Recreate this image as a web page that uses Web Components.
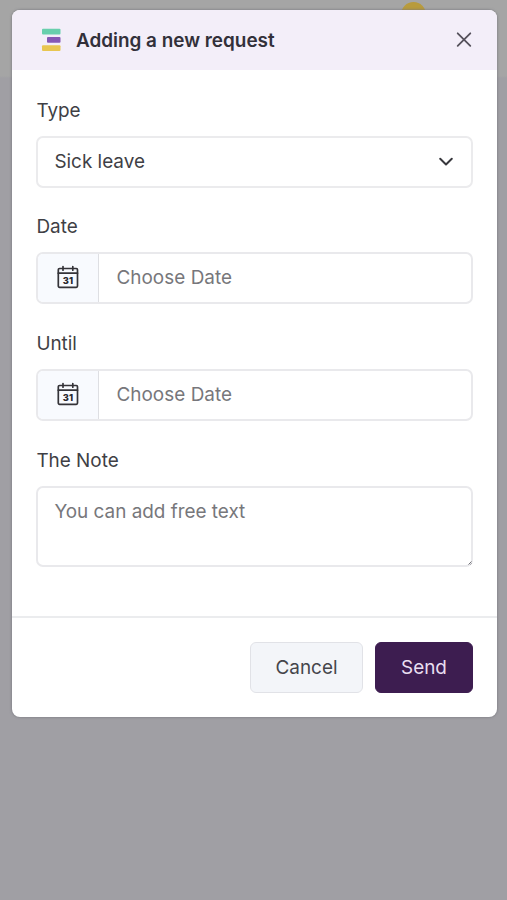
<!DOCTYPE html>
<html lang="en">
<head>
<meta charset="utf-8">
<title>Adding a new request</title>
<style>
html,body{margin:0;height:100%}
body{font-family:Inter,"Liberation Sans",sans-serif;font-size:18.9px;line-height:26px;color:#3f3f45;overflow:hidden}
</style>
</head>
<body>
<request-page>
  <request-dialog heading="Adding a new request">
    <form-field label="Type"><select-box>Sick leave</select-box></form-field>
    <form-field label="Date"><date-box>Choose Date</date-box></form-field>
    <form-field label="Until"><date-box>Choose Date</date-box></form-field>
    <form-field label="The Note"><note-box>You can add free text</note-box></form-field>
    <action-button slot="actions">Cancel</action-button>
    <action-button slot="actions" variant="primary">Send</action-button>
  </request-dialog>
</request-page>
<script>
const element = (name, render) => customElements.define(name, class extends HTMLElement {
  constructor() {
    super();
    this.attachShadow({mode: "open"});
  }
  connectedCallback() {
    this.shadowRoot.innerHTML = render(this);
  }
});

element("request-page", () => `
<style>
:host{display:block;box-sizing:border-box;height:900px;padding:9.5px 10px 0 12px;position:relative;background:linear-gradient(#a5a5a5 0 76px,#a09fa4 78px)}
.avatar{position:absolute;left:401px;top:2px;width:25px;height:25px;border-radius:50%;background:#b89b3c}
</style>
<span class="avatar"></span><slot></slot>`);

element("request-dialog", host => `
<style>
:host{position:relative;height:707.5px;background:#fff;border-radius:8px;overflow:hidden;box-shadow:0 0 2px 1px #77777d88;display:flex;flex-direction:column}
header{height:60.5px;box-sizing:border-box;background:#f3eef9;display:flex;align-items:center;padding:0 23px 0 29px;flex:none}
h1{font-size:18.9px;line-height:26px;font-weight:600;margin:2px auto 0 14px;color:#32303a;white-space:nowrap}
svg{display:block}
main{flex:1;padding:27.6px 24px 0 24.4px;display:flex;flex-direction:column}
footer{height:101.5px;flex:none;border-top:2px solid #ebecee;box-sizing:border-box;display:flex;justify-content:flex-end;gap:12px;padding:24.3px 24px 0}
</style>
<header>
<svg width="21" height="24" viewBox="0 0 21 24"><rect x="1" y=".8" width="18.5" height="5.7" rx="1" fill="#68cfad"/><rect x="6" y="9" width="13.5" height="5.7" rx="1" fill="#8558b5"/><rect x="1" y="17.2" width="18.5" height="5.7" rx="1" fill="#e8c651"/></svg>
<h1>${host.getAttribute("heading")}</h1>
<svg width="20" height="20" viewBox="0 0 20 20" fill="none" stroke="#55515c" stroke-width="1.8" stroke-linecap="round"><path d="M3.7 3.3 16.3 15.9M16.3 3.3 3.7 15.9"/></svg>
</header>
<main><slot></slot></main>
<footer><slot name="actions"></slot></footer>`);

element("form-field", host => `
<style>
:host{display:block;height:90px;margin-bottom:26.7px}
label{display:block;height:26px;margin-bottom:12px}
</style>
<label>${host.getAttribute("label")}</label><slot></slot>`);

element("select-box", () => `
<style>
:host{display:flex;align-items:center;justify-content:space-between;box-sizing:border-box;height:52px;border:2px solid #ebebed;border-radius:7px;padding:0 17px 0 16px}
</style>
<slot></slot>
<svg width="16" height="16" viewBox="0 0 16 16" fill="none" stroke="#37373c" stroke-width="2" stroke-linecap="round" stroke-linejoin="round"><path d="m2.2 4.8 5.8 5.7 5.8-5.7"/></svg>`);

element("date-box", () => `
<style>
:host{display:flex;align-items:stretch;box-sizing:border-box;height:52px;border:2px solid #e9e9ec;border-radius:7px;overflow:hidden;color:#77777b}
.icon{width:61px;box-sizing:border-box;flex:none;background:#f8fafe;border-right:1px solid #dedfe3;display:flex;align-items:center;justify-content:center}
.value{padding-left:17px;align-self:center;letter-spacing:.05px}
text{font:800 9.3px Inter,sans-serif;letter-spacing:.2px}
</style>
<span class="icon"><svg width="24" height="26" viewBox="0 0 24 26" fill="none" stroke="#343338" stroke-width="1.7" stroke-linecap="round"><rect x="2.3" y="3.5" width="19.2" height="18.8" rx="1.2"/><path d="M2.3 8.2h19.2M7 1.6v3.6M16.8 1.6v3.6"/><text x="12" y="18.6" text-anchor="middle" fill="#29282d" stroke="none">31</text></svg></span>
<span class="value"><slot></slot></span>`);

element("note-box", () => `
<style>
:host{display:block;position:relative;box-sizing:border-box;height:81px;border:2px solid #e9e9ec;border-radius:7px;padding:11px 16px;color:#77777b}
svg{position:absolute;right:-1px;bottom:0}
</style>
<slot></slot><svg width="4" height="4" stroke="#737378"><path d="M.5 3.5l3-3M2.5 3.5l1-1"/></svg>`);

element("action-button", host => {
  const primary = host.getAttribute("variant") === "primary";
  return `
<style>
:host{display:flex;align-items:center;justify-content:center;box-sizing:border-box;height:51px;padding-top:1px;border-radius:6px;width:${primary ? 98 : 113}px;border:1.5px solid ${primary ? "#3d1d50" : "#e1e2e7"};background:${primary ? "#3d1d50" : "#f3f5f9"};color:${primary ? "#e9dff0" : "#45454b"}}
</style><slot></slot>`;
});
</script>
</body>
</html>
